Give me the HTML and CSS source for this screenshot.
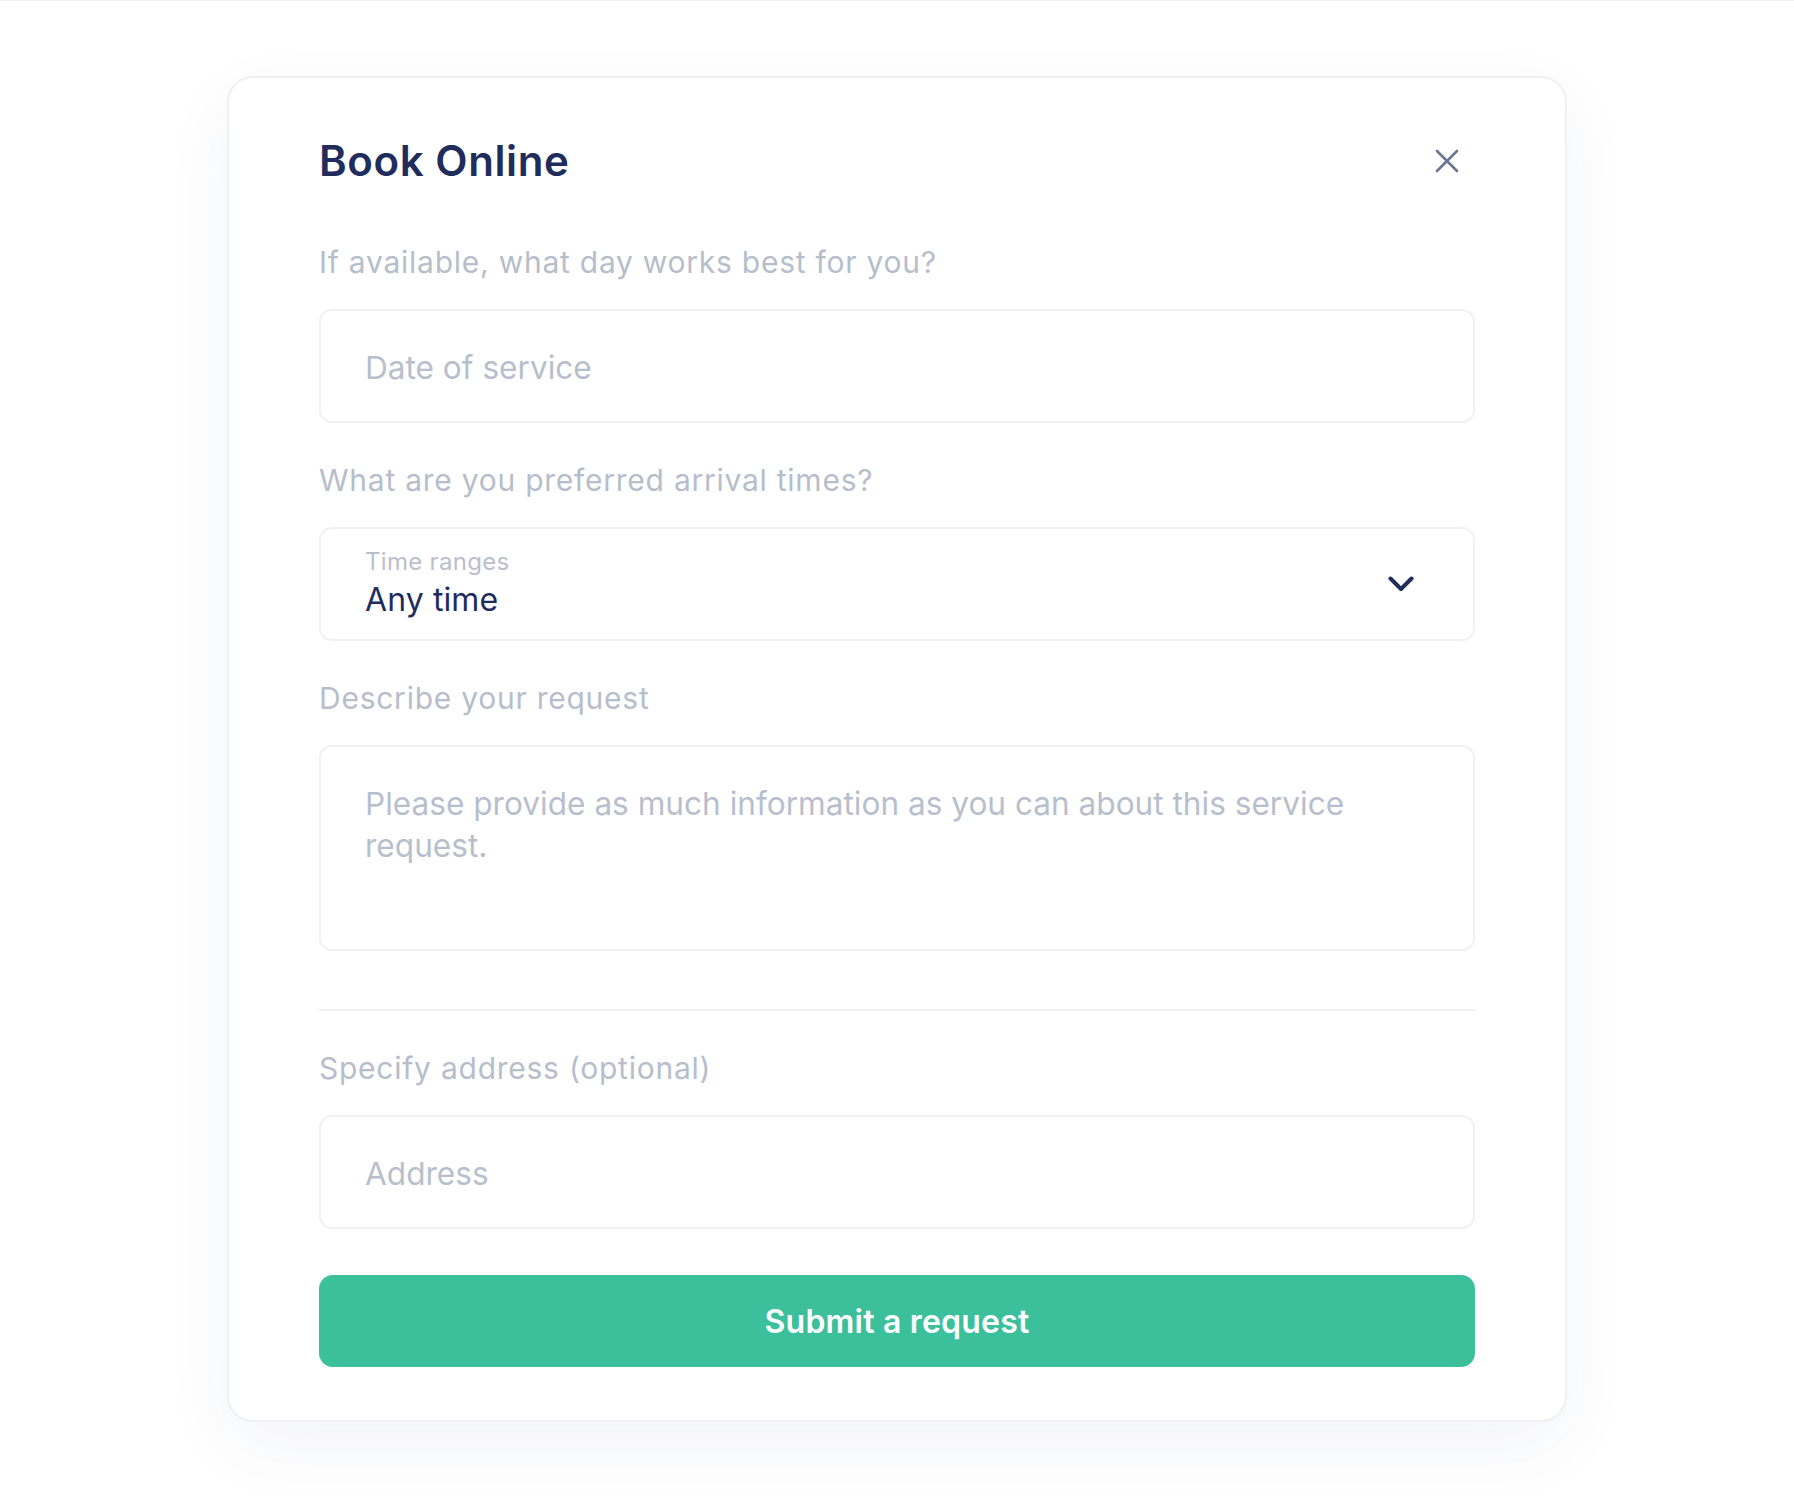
FILE: index.html
```html
<!DOCTYPE html>
<html lang="en">
<head>
<meta charset="utf-8">
<title>Book Online</title>
<link rel="stylesheet" href="styles.css">
</head>
<body>
<div class="page">
  <div class="card">
    <div class="card-head">
      <h1 class="title">Book Online</h1>
      <button class="close" aria-label="Close">
        <svg width="24" height="24" viewBox="0 0 24 24"><path d="M2 2 L22 22 M22 2 L2 22" fill="none" stroke="#6b7592" stroke-width="2.6" stroke-linecap="round"/></svg>
      </button>
    </div>

    <div class="field">
      <div class="label">If available, what day works best for you?</div>
      <div class="input"><span class="placeholder">Date of service</span></div>
    </div>

    <div class="field">
      <div class="label">What are you preferred arrival times?</div>
      <div class="input select">
        <div class="select-text">
          <div class="select-caption">Time ranges</div>
          <div class="select-value">Any time</div>
        </div>
        <svg class="chevron" width="26" height="16" viewBox="0 0 26 16"><path d="M2.5 2.5 L13 13 L23.5 2.5" fill="none" stroke="#1f2c5c" stroke-width="4" stroke-linecap="round" stroke-linejoin="round"/></svg>
      </div>
    </div>

    <div class="field">
      <div class="label">Describe your request</div>
      <div class="textarea"><span class="placeholder">Please provide as much information as you can about this service request.</span></div>
    </div>

    <div class="divider"></div>

    <div class="field">
      <div class="label">Specify address (optional)</div>
      <div class="input"><span class="placeholder">Address</span></div>
    </div>

    <button class="submit">Submit a request</button>
  </div>
</div>
</body>
</html>
```
FILE: styles.css
```css
* { box-sizing: border-box; }

html, body {
  margin: 0;
  padding: 0;
  background: #ffffff;
}

body {
  font-family: "Inter", "Liberation Sans", sans-serif;
  border-top: 1px solid #eeeff2;
}

.page {
  display: flex;
  justify-content: center;
  padding-top: 75px;
  padding-bottom: 76px;
}

.card {
  width: 1340px;
  background: #ffffff;
  border: 2px solid #eff0f5;
  border-radius: 26px;
  box-shadow: 0 24px 70px rgba(40, 50, 110, 0.055);
  padding: 58px 90px 53px 90px;
  display: flex;
  flex-direction: column;
}

.card-head {
  display: flex;
  align-items: center;
  justify-content: space-between;
}

.title {
  margin: 0;
  font-size: 42px;
  line-height: 50px;
  font-weight: 600;
  color: #1f2c5c;
  letter-spacing: 0.6px;
}

.close {
  border: 0;
  background: none;
  padding: 0;
  margin: 0 16px 0 0;
  width: 24px;
  height: 24px;
  display: block;
}
.close svg { display: block; }

.field {
  display: flex;
  flex-direction: column;
  margin-top: 37px;
}
.card-head + .field { margin-top: 56px; }

.label {
  font-size: 30px;
  line-height: 40px;
  color: #b6bdcb;
  letter-spacing: 0.75px;
  margin-bottom: 27px;
}

.input {
  height: 114px;
  border: 2px solid #eff0f4;
  border-radius: 13px;
  display: flex;
  align-items: center;
  padding: 3px 44px 0 44px;
}

.placeholder {
  font-size: 31.6px;
  line-height: 42px;
  color: #b8bfcc;
  letter-spacing: 0;
}

.select {
  justify-content: space-between;
  padding: 0 59px 2px 44px;
}

.select-text {
  display: flex;
  flex-direction: column;
  gap: 3px;
}

.select-caption {
  font-size: 24px;
  line-height: 30px;
  color: #b9c0cc;
  letter-spacing: 0.3px;
}

.select-value {
  font-size: 32px;
  line-height: 40px;
  color: #1f2c5c;
  letter-spacing: 0.1px;
}

.chevron { display: block; margin-top: 2px; }

.textarea {
  height: 206px;
  border: 2px solid #eff0f4;
  border-radius: 13px;
  padding: 36px 44px 0 44px;
}

.divider {
  height: 2px;
  background: #f0f1f5;
  margin-top: 58px;
}
.divider + .field { margin-top: 37px; }

.submit {
  margin-top: 46px;
  height: 92px;
  width: 100%;
  border: 0;
  border-radius: 14px;
  background: #3cc09c;
  color: #ffffff;
  font-family: "Inter", "Liberation Sans", sans-serif;
  font-size: 32px;
  font-weight: 600;
  letter-spacing: 0.2px;
  padding: 0;
}
```
